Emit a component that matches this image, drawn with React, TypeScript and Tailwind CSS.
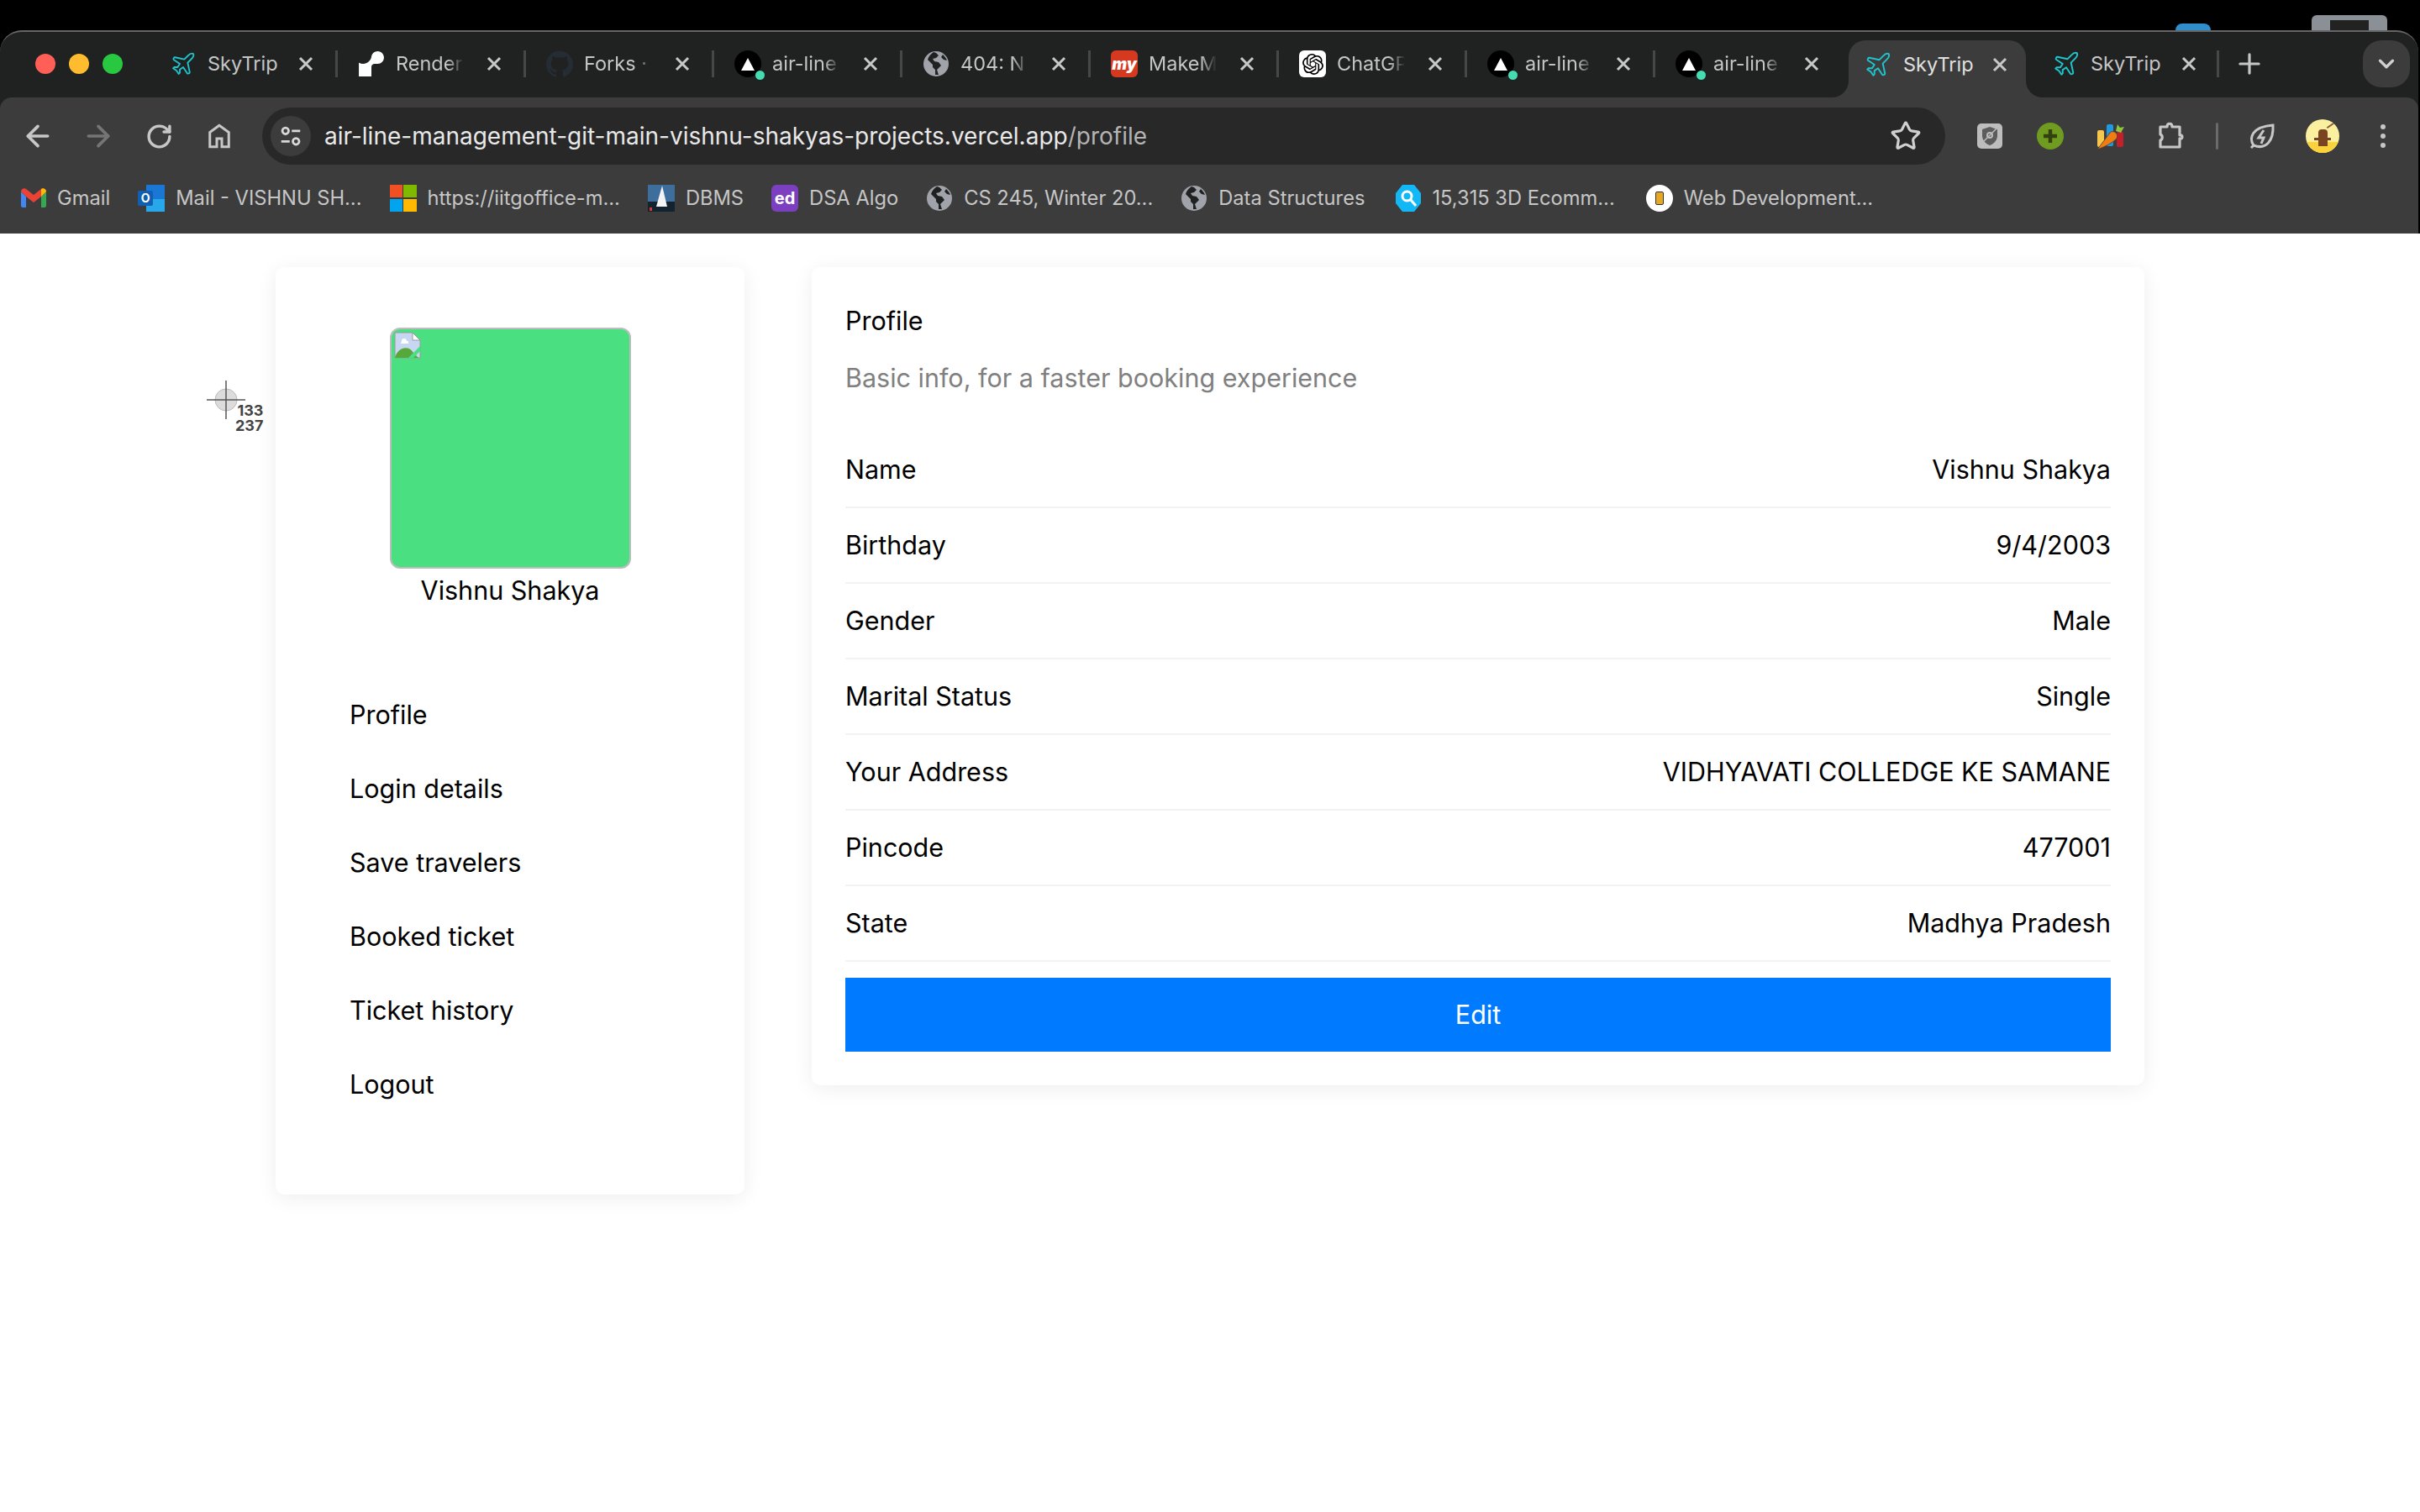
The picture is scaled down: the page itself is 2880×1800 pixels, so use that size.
import { ReactNode } from 'react'
import { ArrowLeft, ArrowRight, ChevronDown, Plane, Plus, RotateCw, Star } from 'lucide-react'
import { SiGithub, SiOpenai, SiRender } from 'react-icons/si'

const PlaneIcon = () => <Plane size={34} strokeWidth={1.4} className="text-[#1fc4cc]" />

const VercelIcon = () => (
  <div className="relative w-8 h-8 rounded-full bg-black flex items-center justify-center">
    <svg width="16" height="15" viewBox="0 0 16 15"><path d="M8 0l8 15H0z" fill="#fff" /></svg>
    <div className="absolute right-[-4px] bottom-[-3px] w-[11px] h-[11px] rounded-full bg-[#45dcb4]" />
  </div>
)

const GlobeIcon = () => (
  <svg width="32" height="32" viewBox="0 0 32 32">
    <circle cx="16" cy="16" r="15" fill="#a0a4aa" />
    <path d="M13 2c-3 2-6 5-7 9l6 6v3l3 3v6h4l-2-6 5-5-3-4-5-1-2-3 4-1 3-3-3-3-3-1zM24 5l-2 3 3 3 4 1c-1-3-3-5-5-7z" fill="#202222" />
  </svg>
)

const MakeMyTripIcon = () => (
  <div className="w-8 h-8 rounded-md bg-[#d5391f] flex items-center justify-center overflow-hidden">
    <span className="text-white text-[19px] font-black italic leading-none">my</span>
  </div>
)

const Close = () => (
  <svg width="18" height="18" viewBox="0 0 18 18" className="shrink-0">
    <path d="M2 2l14 14M16 2L2 16" stroke="#c8c8c8" strokeWidth="3" />
  </svg>
)

const tabs: { title: string; icon: ReactNode }[] = [
  { title: 'SkyTrip', icon: <PlaneIcon /> },
  { title: 'Render', icon: <SiRender size={30} color="#fff" /> },
  { title: 'Forks ·', icon: <SiGithub size={32} color="#262c33" /> },
  { title: 'air-line', icon: <VercelIcon /> },
  { title: '404: N', icon: <GlobeIcon /> },
  { title: 'MakeM', icon: <MakeMyTripIcon /> },
  {
    title: 'ChatGP',
    icon: (
      <div className="w-8 h-8 rounded-md bg-white flex items-center justify-center">
        <SiOpenai size={25} color="#000" />
      </div>
    ),
  },
  { title: 'air-line', icon: <VercelIcon /> },
  { title: 'air-line', icon: <VercelIcon /> },
]

function TabStrip() {
  return (
    <div className="h-20 pt-[10px] pl-[42px] pr-[10px] flex bg-[#202222] rounded-t-[26px] border-t-2 border-[#666] text-[23.5px] text-[#c6c6c6]">
      {/* traffic lights */}
      <div className="w-[104px] h-[56px] mr-8 flex items-center gap-4 shrink-0">
        <div className="w-6 h-6 rounded-full bg-[#ff5f57]" />
        <div className="w-6 h-6 rounded-full bg-[#febc2e]" />
        <div className="w-6 h-6 rounded-full bg-[#28c840]" />
      </div>

      {tabs.map((tab, i) => (
        <div key={i} className="w-[224px] h-[56px] flex items-center pl-6 relative shrink-0">
          <div className="w-8 flex justify-center shrink-0">{tab.icon}</div>
          <div
            className={
              i === 0
                ? 'ml-[13px] w-[86px] whitespace-nowrap overflow-hidden'
                : 'ml-[13px] w-[86px] whitespace-nowrap overflow-hidden [mask-image:linear-gradient(to_right,black_72%,transparent_94%)]'
            }
          >
            {tab.title}
          </div>
          <div className="ml-[22px]"><Close /></div>
          {i < 8 && <div className="absolute right-0 top-[12px] w-[3px] h-8 bg-[#474747]" />}
        </div>
      ))}

      {/* active tab */}
      <div className="relative ml-[6px] w-[211px] h-[68px] bg-[#3c3c3c] rounded-t-[20px] pt-[12px] pl-[18px] shrink-0 text-[#e0e0e0]">
        <div className="h-[33px] flex items-center">
          <PlaneIcon />
          <span className="ml-[13px] w-[106px]">SkyTrip</span>
          <Close />
        </div>
        <div className="absolute left-[-20px] bottom-0 w-5 h-5 bg-[#3c3c3c]">
          <div className="w-full h-full bg-[#202222] rounded-br-[20px]" />
        </div>
        <div className="absolute right-[-20px] bottom-0 w-5 h-5 bg-[#3c3c3c]">
          <div className="w-full h-full bg-[#202222] rounded-bl-[20px]" />
        </div>
      </div>

      {/* last tab */}
      <div className="w-[230px] h-[56px] flex items-center pl-[31px] relative shrink-0">
        <PlaneIcon />
        <span className="ml-[12px] w-[108px]">SkyTrip</span>
        <Close />
        <div className="absolute right-0 top-[12px] w-[3px] h-8 bg-[#474747]" />
      </div>
      <div className="ml-[17px] h-[56px] flex items-center">
        <Plus size={38} strokeWidth={2} className="text-[#c6c6c6]" />
      </div>
      <div className="ml-auto w-14 h-14 rounded-[22px] bg-[#3c3c3c] flex items-center justify-center">
        <ChevronDown size={30} strokeWidth={2.6} className="text-[#d0d0d0]" />
      </div>
    </div>
  )
}

const ToolBtn = ({ children }: { children: ReactNode }) => (
  <div className="w-[72px] flex items-center justify-center shrink-0">{children}</div>
)

function Toolbar() {
  return (
    <div className="h-20 pl-[9px] pr-[6px] flex items-center pt-3 text-[#c7c7c7]">
      <ToolBtn><ArrowLeft size={40} strokeWidth={2.2} /></ToolBtn>
      <ToolBtn><ArrowRight size={40} strokeWidth={2.2} className="text-[#757575]" /></ToolBtn>
      <ToolBtn><RotateCw size={33} strokeWidth={2.5} /></ToolBtn>
      <ToolBtn>
        <svg width="36" height="36" viewBox="0 0 24 24" fill="none" stroke="currentColor" strokeWidth="2">
          <path d="M12 3.5L4.5 9v11.5h5.5V14h4v6.5h5.5V9z" />
        </svg>
      </ToolBtn>

      <div className="ml-[15px] flex-1 h-[68px] rounded-full bg-[#282828] flex items-center pl-[10px] pr-[28px]">
        <div className="w-12 h-12 rounded-full bg-[#3c3c3c] flex items-center justify-center">
          <svg width="30" height="30" viewBox="0 0 24 24" fill="none" stroke="#d8d8d8" strokeWidth="2.2">
            <circle cx="7" cy="7" r="3" />
            <path d="M13 7h8M3 17h8" />
            <circle cx="17" cy="17" r="3" />
          </svg>
        </div>
        <div className="ml-4 flex-1 text-[28px] text-[#e9e9e9] whitespace-nowrap">
          air-line-management-git-main-vishnu-shakyas-projects.vercel.app<span className="text-[#b4b4b4]">/profile</span>
        </div>
        <Star size={38} strokeWidth={2} className="text-[#d0d0d0]" />
      </div>

      <div className="ml-[17px] flex">
        <ToolBtn>
          <div className="w-[30px] h-[30px] rounded-[5px] bg-[#bdbdbd] flex items-center justify-center">
            <svg width="22" height="24" viewBox="0 0 22 24">
              <path d="M11 1l9 3v7c0 6-4 10-9 12-5-2-9-6-9-12V4z" fill="#5c5c5c" />
              <circle cx="11" cy="11" r="4" fill="#bdbdbd" />
              <circle cx="11" cy="11" r="2" fill="#5c5c5c" />
              <path d="M3 19L19 3" stroke="#bdbdbd" strokeWidth="1.5" />
            </svg>
          </div>
        </ToolBtn>
        <ToolBtn>
          <div className="w-8 h-8 rounded-full bg-[#6f9c20] flex items-center justify-center">
            <svg width="18" height="18" viewBox="0 0 18 18"><path d="M9 1v16M1 9h16" stroke="#33400f" strokeWidth="4.5" /></svg>
          </div>
        </ToolBtn>
        <ToolBtn>
          <svg width="34" height="34" viewBox="0 0 34 34">
            <rect x="1" y="10" width="8" height="20" rx="2" fill="#f5c84c" />
            <rect x="12" y="3" width="8" height="26" rx="2" fill="#1f9ae0" />
            <rect x="24" y="12" width="8" height="18" rx="2" fill="#c4202c" />
            <path d="M1 33L16 13c4-4 11 1 8 7C18 26 9 30 1 33z" fill="#f07d12" stroke="#3c3c3c" strokeWidth="0.8" />
            <path d="M23 11l2-8 3 4 5-1-4 7z" fill="#8dc63f" />
          </svg>
        </ToolBtn>
        <ToolBtn>
          <svg width="36" height="36" viewBox="0 0 36 36" fill="none" stroke="#c7c7c7" strokeWidth="3.2" strokeLinejoin="round">
            <path d="M5 7h8c0-5 6-5 6 0h9v10c4-1 4 5 0 4v10H5v-8c3-1 3-6 0-7z" />
          </svg>
        </ToolBtn>
      </div>
      <div className="w-9 flex justify-center">
        <div className="w-[3px] h-8 bg-[#6a6a6a] rounded" />
      </div>
      <ToolBtn>
        <svg width="36" height="36" viewBox="0 0 36 36" fill="none" stroke="#c7c7c7" strokeWidth="3">
          <path d="M8 29C2 20 6 7 31 5c1 18-8 30-23 24z" />
          <path d="M8 29l-3 3" />
          <path d="M20 11l-6 9h6l-3 7" />
        </svg>
      </ToolBtn>
      <ToolBtn>
        <div className="relative w-10 h-10 rounded-full overflow-hidden bg-[#fbf0a0]">
          <div className="absolute bottom-0 w-full h-[13px] bg-[#fbd23c]" />
          <div className="absolute left-[15px] top-[12px] w-[11px] h-[20px] bg-[#7b4420] rounded-t" />
          <div className="absolute left-[10px] top-[22px] w-[20px] h-[3px] bg-[#7b4420]" />
          <div className="absolute left-[24px] top-[5px] w-[15px] h-[2px] bg-[#8a5a36] -rotate-[35deg]" />
        </div>
      </ToolBtn>
      <ToolBtn>
        <div className="flex flex-col gap-[5px]">
          <div className="w-[6px] h-[6px] rounded-full bg-[#c7c7c7]" />
          <div className="w-[6px] h-[6px] rounded-full bg-[#c7c7c7]" />
          <div className="w-[6px] h-[6px] rounded-full bg-[#c7c7c7]" />
        </div>
      </ToolBtn>
    </div>
  )
}

const GmailIcon = () => (
  <svg width="30" height="24" viewBox="0 0 30 24">
    <path d="M0 4v17a2 2 0 002 2h4V10z" fill="#4285f4" />
    <path d="M30 4v17a2 2 0 01-2 2h-4V10z" fill="#34a853" />
    <path d="M0 4c0-3 4-5 6-3l9 7 9-7c2-2 6 0 6 3l-6 6-9 7-9-7z" fill="#ea4335" />
    <path d="M24 1c2-2 6 0 6 3l-6 6z" fill="#fbbc04" />
  </svg>
)

const OutlookIcon = () => (
  <div className="relative w-8 h-8">
    <div className="absolute right-0 top-0 w-[22px] h-[32px] bg-[#1a78d4]">
      <div className="absolute bottom-0 w-full h-[15px] bg-[#28a8ea]" />
    </div>
    <div className="absolute left-0 top-[7px] w-[18px] h-[18px] rounded-[2px] bg-[#0f5fb3] text-white text-[14px] font-bold leading-[18px] text-center">O</div>
  </div>
)

const bookmarks: { label: string; icon: ReactNode; offset?: string }[] = [
  { label: 'Gmail', icon: <GmailIcon /> },
  { label: 'Mail - VISHNU SH...', icon: <OutlookIcon /> },
  {
    label: 'https://iitgoffice-m...',
    icon: (
      <div className="w-8 h-8 grid grid-cols-2 gap-[1.5px]">
        <div className="bg-[#f25022]" />
        <div className="bg-[#7fba00]" />
        <div className="bg-[#00a4ef]" />
        <div className="bg-[#ffb900]" />
      </div>
    ),
  },
  {
    label: 'DBMS',
    icon: (
      <svg width="32" height="32" viewBox="0 0 32 32">
        <rect width="32" height="32" fill="#3e6f9c" />
        <rect y="20" width="32" height="12" fill="#12222f" />
        <path d="M17 1l6 25H10z" fill="#f4f4f4" />
        <rect x="2" y="27" width="3" height="4" fill="#d33" />
      </svg>
    ),
  },
  {
    label: 'DSA Algo',
    icon: (
      <div className="w-8 h-8 rounded-[6px] bg-[#7b3fbf] flex items-center justify-center text-white text-[20px] font-bold leading-none">ed</div>
    ),
  },
  { label: 'CS 245, Winter 20...', icon: <GlobeIcon /> },
  { label: 'Data Structures', icon: <GlobeIcon /> },
  {
    label: '15,315 3D Ecomm...',
    offset: 'ml-[4px]',
    icon: (
      <svg width="30" height="32" viewBox="0 0 30 32">
        <path d="M8 0h14l8 10v12l-8 10H8L0 22V10z" fill="#12b8f5" />
        <circle cx="13.5" cy="13.5" r="5.5" fill="none" stroke="#fff" strokeWidth="3" />
        <path d="M18 18l6 7" stroke="#fff" strokeWidth="3" />
      </svg>
    ),
  },
  {
    label: 'Web Development...',
    offset: 'ml-[4px]',
    icon: (
      <div className="w-8 h-8 rounded-full bg-white flex items-center justify-center">
        <div className="w-[10px] h-[16px] rounded-[2px] bg-[#e5a823] border border-[#333]" />
      </div>
    ),
  },
]

function Bookmarks() {
  return (
    <div className="h-[82px] pb-[2px] pl-[25px] flex items-center gap-[33px] text-[23.7px] text-[#c6c6c6]">
      {bookmarks.map((b) => (
        <div key={b.label} className={`flex items-center gap-[13px] whitespace-nowrap ${b.offset ?? ''}`}>
          {b.icon}
          <span>{b.label}</span>
        </div>
      ))}
    </div>
  )
}

const rows = [
  ['Name', 'Vishnu Shakya'],
  ['Birthday', '9/4/2003'],
  ['Gender', 'Male'],
  ['Marital Status', 'Single'],
  ['Your Address', 'VIDHYAVATI COLLEDGE KE SAMANE'],
  ['Pincode', '477001'],
  ['State', 'Madhya Pradesh'],
]

const menu = ['Profile', 'Login details', 'Save travelers', 'Booked ticket', 'Ticket history', 'Logout']

export default function App() {
  return (
    <div className="relative w-[2880px] h-[1800px] overflow-hidden bg-white text-black font-['Inter',sans-serif]">
      {/* desktop behind the window */}
      <div className="relative h-9 bg-black">
        <div className="absolute left-[2589px] top-[28px] w-[42px] h-2 rounded-t-full bg-[#2f8ecb]" />
        <div className="absolute left-[2751px] top-[18px] w-[90px] h-[18px] rounded-t-[6px] bg-[#8b8f96] flex justify-center pt-[6px]">
          <div className="w-[46px] h-3 bg-[#222]" />
        </div>
      </div>

      {/* browser chrome */}
      <div className="bg-black pr-[2px]">
        <TabStrip />
        <div className="bg-[#202222]">
          <div className="bg-[#3c3c3c] rounded-t-[14px]">
            <Toolbar />
            <Bookmarks />
          </div>
        </div>
      </div>

      {/* cursor from the screen capture */}
      <div className="absolute left-[246px] top-[453px]">
        <svg width="46" height="46" viewBox="0 0 46 46">
          <circle cx="23" cy="23" r="13" fill="#dcdcdc" stroke="#bbb" />
          <path d="M0 23h46M23 0v46" stroke="#555" strokeWidth="1.5" />
        </svg>
      </div>
      <div className="absolute left-[280px] top-[480px] text-[18px] leading-[18px] font-bold text-[#444] text-right">
        <div>133</div>
        <div>237</div>
      </div>

      {/* page */}
      <div className="w-[2224px] mx-auto pt-10 flex items-start gap-20 text-[30.5px]">
        <aside className="w-[558px] pt-[72px] pb-[87px] bg-white rounded-[10px] shadow-[0_4px_24px_rgba(0,0,0,0.07)]">
          <div className="flex flex-col items-center">
            <div className="w-[287px] h-[287px] rounded-[12px] bg-[#4ae082] border-2 border-[#bdbdbd] p-[3px]">
              <svg width="32" height="32" viewBox="0 0 32 32">
                <path d="M1 1h21l9 9v21H1z" fill="#c7d7f2" stroke="#999" />
                <path d="M1 31c3-12 16-16 22-6l6 6z" fill="#56a83b" />
                <path d="M9 11a3 3 0 016 0h2v3H8z" fill="#fff" />
                <path d="M22 1v9h9z" fill="#fff" stroke="#999" />
                <path d="M17 31L31 17v6l-8 8z" fill="#4ae082" />
              </svg>
            </div>
            <div className="h-12 mt-[2px] leading-[48px]">Vishnu Shakya</div>
          </div>
          <nav className="mt-[100px] pb-5 pl-[88px] flex flex-col gap-10">
            {menu.map((item) => (
              <div key={item} className="h-12 leading-[48px]">{item}</div>
            ))}
          </nav>
        </aside>

        <main className="flex-1 p-10 bg-white rounded-[10px] shadow-[0_4px_24px_rgba(0,0,0,0.07)]">
          <div className="h-12 leading-[48px]">Profile</div>
          <div className="h-12 mt-5 leading-[48px] text-[#808080]">Basic info, for a faster booking experience</div>
          <div className="mt-[41px]">
            {rows.map(([label, value]) => (
              <div key={label} className="h-[90px] flex items-center justify-between border-b-2 border-[#f2f2f2]">
                <span>{label}</span>
                <span>{value}</span>
              </div>
            ))}
          </div>
          <button className="mt-[19px] w-full h-[88px] bg-[#007bff] text-white">Edit</button>
        </main>
      </div>
    </div>
  )
}
